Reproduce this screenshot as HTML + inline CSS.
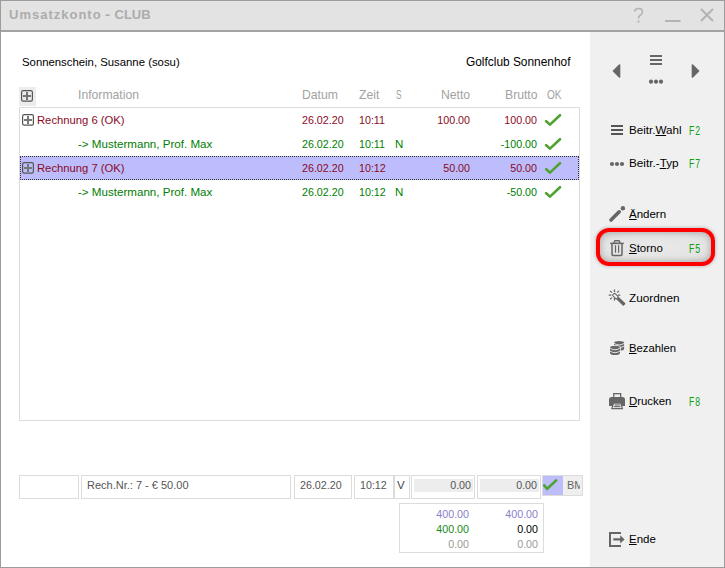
<!DOCTYPE html>
<html><head><meta charset="utf-8">
<style>
*{margin:0;padding:0;box-sizing:border-box}
html,body{width:725px;height:568px;overflow:hidden;background:#fff}
body{position:relative;font-family:"Liberation Sans",sans-serif;font-size:11.5px;color:#000}
.a{position:absolute;white-space:nowrap;line-height:14px}
#win{position:absolute;left:0;top:0;width:725px;height:568px;border:1px solid #9c9c9c;background:#fff}
#title{position:absolute;left:1px;top:1px;width:723px;height:29px;background:#e3e3e3}
#tline{position:absolute;left:1px;top:30px;width:723px;height:2px;background:#a3a3a3}
#panel{position:absolute;left:590px;top:32px;width:134px;height:535px;background:#f0f0f0}
.hdr{color:#a2a2a2;font-size:12.2px}
.num{font-size:10.7px}
.red{color:#8a0a1e}
.grn{color:#008000}
.box{position:absolute;border:1px solid #dcdcdc;background:#fff}
.k{color:#000}
.fk{color:#0ea00e;font-size:12.4px;letter-spacing:1.4px;transform:scaleX(0.7);transform-origin:0 0}
.u{text-decoration:underline}
</style></head><body>
<div id="win"></div>
<div id="title"></div>
<div id="tline"></div>
<div class="a" style="left:9px;top:5px;font-size:13px;font-weight:bold;color:#acacac;line-height:20px;letter-spacing:1px">Umsatzkonto</div>
<div class="a" style="left:105px;top:5px;font-size:13px;font-weight:bold;color:#acacac;line-height:20px;transform:scaleX(1.2);transform-origin:0 0">-</div>
<div class="a" style="left:114.5px;top:5px;font-size:13px;font-weight:bold;color:#acacac;line-height:20px">CLUB</div>
<!-- title icons -->
<svg class="a" style="left:620px;top:0" width="104" height="30" viewBox="620 0 104 30">
  <path d="M634.5 11.5 Q635 8.5 638.5 8.5 Q642.5 8.5 642.5 12 Q642.5 14 640 15.5 Q638.5 16.5 638.5 18.5" fill="none" stroke="#b3b3b3" stroke-width="1.6"/>
  <rect x="637.6" y="20.5" width="1.8" height="2" fill="#b3b3b3"/>
  <rect x="665" y="20" width="15.5" height="2" fill="#b3b3b3"/>
  <path d="M701 9 L713 21 M713 9 L701 21" stroke="#b3b3b3" stroke-width="2"/>
</svg>

<div id="panel"></div>

<div class="a k" style="left:22px;top:55px;font-size:11.35px">Sonnenschein, Susanne (sosu)</div>
<div class="a k" style="left:466px;top:55px;font-size:11.9px">Golfclub Sonnenhof</div>

<!-- header -->
<div class="a" style="left:19px;top:87px;width:17px;height:19px;background:#ececec"></div>
<div class="a hdr" style="left:78px;top:88px">Information</div>
<div class="a hdr" style="left:302px;top:88px">Datum</div>
<div class="a hdr" style="left:359px;top:88px">Zeit</div>
<div class="a hdr" style="left:395.5px;top:88px;transform:scaleX(0.68);transform-origin:0 0">S</div>
<div class="a hdr" style="left:441px;top:88px">Netto</div>
<div class="a hdr" style="left:505px;top:88px">Brutto</div>
<div class="a hdr" style="left:547px;top:88px;transform:scaleX(0.83);transform-origin:0 0">OK</div>

<!-- table -->
<div class="box" style="left:19px;top:107px;width:561px;height:314px"></div>
<div class="a" style="left:20px;top:156px;width:559px;height:24px;background:#bdbdfb;border:1px dotted #333"></div>

<div class="a red" style="left:37px;top:113px;font-size:11.25px">Rechnung 6 (OK)</div>
<div class="a red num" style="left:302px;top:113px">26.02.20</div>
<div class="a red num" style="left:359px;top:113px">10:11</div>
<div class="a red num" style="left:430px;top:113px;width:40px;text-align:right">100.00</div>
<div class="a red num" style="left:497px;top:113px;width:40px;text-align:right">100.00</div>

<div class="a grn" style="left:78px;top:137px;font-size:11.6px">-&gt; Mustermann, Prof. Max</div>
<div class="a grn num" style="left:302px;top:137px">26.02.20</div>
<div class="a grn num" style="left:359px;top:137px">10:11</div>
<div class="a grn" style="left:395px;top:137px">N</div>
<div class="a grn num" style="left:487px;top:137px;width:50px;text-align:right">-100.00</div>

<div class="a red" style="left:37px;top:161px;font-size:11.25px">Rechnung 7 (OK)</div>
<div class="a red num" style="left:302px;top:161px">26.02.20</div>
<div class="a red num" style="left:359px;top:161px">10:12</div>
<div class="a red num" style="left:430px;top:161px;width:40px;text-align:right">50.00</div>
<div class="a red num" style="left:497px;top:161px;width:40px;text-align:right">50.00</div>

<div class="a grn" style="left:78px;top:185px;font-size:11.6px">-&gt; Mustermann, Prof. Max</div>
<div class="a grn num" style="left:302px;top:185px">26.02.20</div>
<div class="a grn num" style="left:359px;top:185px">10:12</div>
<div class="a grn" style="left:395px;top:185px">N</div>
<div class="a grn num" style="left:487px;top:185px;width:50px;text-align:right">-50.00</div>

<!-- plus icons & checks -->
<svg class="a" style="left:0;top:0" width="590" height="210" viewBox="0 0 590 210">
  <g transform="translate(21 90)"><rect x="0.6" y="0.6" width="10.8" height="10.6" rx="1.6" fill="none" stroke="#555" stroke-width="1.2"/><path d="M2 6 H10 M6 2 V10" stroke="#777" stroke-width="2"/></g>
  <g transform="translate(22 114)"><rect x="0.6" y="0.6" width="10.8" height="10.6" rx="1.6" fill="none" stroke="#555" stroke-width="1.2"/><path d="M2 6 H10 M6 2 V10" stroke="#777" stroke-width="2"/></g>
  <g transform="translate(22 162)"><rect x="0.6" y="0.6" width="10.8" height="10.6" rx="1.6" fill="none" stroke="#555" stroke-width="1.2"/><path d="M2 6 H10 M6 2 V10" stroke="#777" stroke-width="2"/></g>
  <path transform="translate(545 114)" d="M1.2 7.2 L5 10.6 L15 1.2" fill="none" stroke="#4fa22f" stroke-width="2.6" stroke-linecap="round"/>
  <path transform="translate(545 138)" d="M1.2 7.2 L5 10.6 L15 1.2" fill="none" stroke="#4fa22f" stroke-width="2.6" stroke-linecap="round"/>
  <path transform="translate(545 162)" d="M1.2 7.2 L5 10.6 L15 1.2" fill="none" stroke="#4fa22f" stroke-width="2.6" stroke-linecap="round"/>
  <path transform="translate(545 186)" d="M1.2 7.2 L5 10.6 L15 1.2" fill="none" stroke="#4fa22f" stroke-width="2.6" stroke-linecap="round"/>
</svg>

<!-- bottom inputs -->
<div class="box" style="left:19px;top:475px;width:60px;height:24px"></div>
<div class="box" style="left:81px;top:475px;width:210px;height:24px"></div>
<div class="a" style="left:87px;top:478px;color:#555;font-size:11px">Rech.Nr.: 7 - € 50.00</div>
<div class="box" style="left:294px;top:475px;width:58px;height:24px"></div>
<div class="a" style="left:300px;top:478px;color:#555;font-size:10.7px">26.02.20</div>
<div class="box" style="left:354px;top:475px;width:40px;height:24px"></div>
<div class="a" style="left:360px;top:478px;color:#555;font-size:10.7px">10:12</div>
<div class="box" style="left:394px;top:475px;width:16px;height:24px"></div>
<div class="a" style="left:397px;top:478px;color:#444">V</div>
<div class="box" style="left:411px;top:475px;width:64px;height:24px"></div>
<div class="a" style="left:414px;top:479px;width:59px;height:13px;background:#ededed"></div>
<div class="a" style="left:430px;top:478px;width:41px;text-align:right;color:#555;font-size:10.7px">0.00</div>
<div class="box" style="left:477px;top:475px;width:64px;height:24px"></div>
<div class="a" style="left:480px;top:479px;width:59px;height:13px;background:#ededed"></div>
<div class="a" style="left:496px;top:478px;width:41px;text-align:right;color:#555;font-size:10.7px">0.00</div>
<div class="a" style="left:542px;top:475px;width:41px;height:21px;background:#efefef;border:1px solid #dcdcdc"></div>
<div class="a" style="left:543px;top:476px;width:20px;height:19px;background:#bdbdfb"></div>
<svg class="a" style="left:540px;top:470px" width="25" height="25" viewBox="540 470 25 25"><path d="M544.2 485.4 L547.2 488.8 L556.2 480.4" fill="none" stroke="#4fa22f" stroke-width="2.6" stroke-linecap="round"/></svg>
<div class="a" style="left:567px;top:476px;width:13px;height:19px;overflow:hidden"><div class="a" style="left:0;top:2px;color:#666;font-size:11px">BM</div></div>

<div class="box" style="left:399px;top:503px;width:145px;height:50px"></div>
<div class="a" style="left:420px;top:507px;width:49px;text-align:right;color:#8a80c8;font-size:10.7px">400.00</div>
<div class="a" style="left:489px;top:507px;width:49px;text-align:right;color:#8a80c8;font-size:10.7px">400.00</div>
<div class="a" style="left:420px;top:522px;width:49px;text-align:right;color:#1a8a1a;font-size:10.7px">400.00</div>
<div class="a" style="left:489px;top:522px;width:49px;text-align:right;color:#000;font-size:10.7px">0.00</div>
<div class="a" style="left:420px;top:537px;width:49px;text-align:right;color:#999;font-size:10.7px">0.00</div>
<div class="a" style="left:489px;top:537px;width:49px;text-align:right;color:#999;font-size:10.7px">0.00</div>

<!-- panel -->
<div class="a" style="left:595.5px;top:228px;width:119px;height:38px;border:4.5px solid #ff0000;border-radius:13px;background:radial-gradient(ellipse at 50% 50%,#e9e9e9 0%,#e4e4e4 60%,#d6d6d6 100%);box-shadow:0 0 3px 1px rgba(0,0,0,0.18), inset 0 0 5px 2px rgba(0,0,0,0.16)"></div>
<svg class="a" style="left:590px;top:32px" width="134" height="535" viewBox="590 32 134 535">
  <path d="M619.5 65 L613.5 71 L619.5 77 Z" fill="#666" stroke="#666" stroke-width="1.6" stroke-linejoin="round"/>
  <path d="M692.5 65 L698.5 71 L692.5 77 Z" fill="#666" stroke="#666" stroke-width="1.6" stroke-linejoin="round"/>
  <rect x="650" y="55" width="12" height="2" fill="#666"/>
  <rect x="650" y="59" width="12" height="2" fill="#666"/>
  <rect x="650" y="63" width="12" height="2" fill="#666"/>
  <circle cx="651" cy="81.7" r="2.1" fill="#666"/>
  <circle cx="656" cy="81.7" r="2.1" fill="#666"/>
  <circle cx="661" cy="81.7" r="2.1" fill="#666"/>
  <!-- red storno box -->
  <!-- hamburger -->
  <rect x="611" y="125" width="12" height="2" fill="#555"/>
  <rect x="611" y="129" width="12" height="2" fill="#555"/>
  <rect x="611" y="133" width="12" height="2" fill="#555"/>
  <circle cx="612" cy="164" r="2.1" fill="#666"/>
  <circle cx="617" cy="164" r="2.1" fill="#666"/>
  <circle cx="622" cy="164" r="2.1" fill="#666"/>
  <!-- pencil -->
  <path d="M611 220 L619.2 211.8" stroke="#666" stroke-width="3.6" stroke-linecap="round"/><circle cx="622.9" cy="208.2" r="2.2" fill="#666"/>
  <!-- trash -->
  <path d="M613.7 243 L614.9 240.7 H619.1 L620.3 243" fill="#c8c8c8" stroke="#666" stroke-width="1.3"/>
  <g fill="none" stroke="#666" stroke-width="1.5">
    <path d="M610.2 243.4 H623.8"/>
    <path d="M612 244 V254.3 Q612 255.6 613.3 255.6 H620.7 Q622 255.6 622 254.3 V244"/>
  </g>
  <path d="M615.5 245.3 V252.7 M618.6 245.3 V252.7" stroke="#666" stroke-width="1.2"/>
  <!-- wand -->
  <g stroke="#666" stroke-width="1.3" fill="none"><path d="M614.5 289.6 V292.1 M614.5 298.1 V300.6 M608.7 295.1 H611.3 M617.8 295.1 H620.3 M610.2 290.9 L611.9 292.6 M618.9 290.9 L617.2 292.6 M610.2 299.3 L611.9 297.6"/></g>
  <g transform="translate(614.3 295) rotate(44)"><rect x="-1.2" y="-1.6" width="5.6" height="3.2" rx="0.8" fill="none" stroke="#666" stroke-width="1.1"/><rect x="4.4" y="-1.7" width="9.8" height="3.4" rx="0.8" fill="#666"/></g>
  <!-- coins -->
  <g transform="translate(619.1 342.8)">
    <rect x="-5" y="0" width="10" height="6" fill="#666"/><ellipse cx="0" cy="0" rx="5" ry="1.9" fill="#666"/><ellipse cx="0" cy="6" rx="5" ry="1.9" fill="#666"/>
    <path d="M-5.5 0.3 Q0 4.1 5.5 0.3 M-5.5 3 Q0 6.8 5.5 3" stroke="#f0f0f0" stroke-width="0.9" fill="none"/>
  </g>
  <g transform="translate(615 347.6)">
    <rect x="-5" y="0" width="10" height="6.2" fill="#666" stroke="#f0f0f0" stroke-width="1.4"/><ellipse cx="0" cy="0" rx="5" ry="1.9" fill="#666" stroke="#f0f0f0" stroke-width="1.4"/><ellipse cx="0" cy="6.2" rx="5" ry="1.9" fill="#666" stroke="#f0f0f0" stroke-width="1.4"/>
    <rect x="-5" y="0" width="10" height="6.2" fill="#666"/><ellipse cx="0" cy="0" rx="5" ry="1.9" fill="#666"/>
    <path d="M-5.5 0.3 Q0 4.1 5.5 0.3 M-5.5 3.2 Q0 7 5.5 3.2" stroke="#f0f0f0" stroke-width="0.9" fill="none"/>
  </g>
  <!-- printer -->
  <rect x="613.75" y="393.65" width="6.9" height="4.6" fill="#f0f0f0" stroke="#666" stroke-width="1.3"/>
  <path d="M609 406 V399.6 Q609 397 611.6 397 H622.4 Q625 397 625 399.6 V406 Z" fill="#666"/>
  <path d="M612.9 402.6 H621.3 L623.2 409.2 H611 Z" fill="#666"/>
  <path d="M614 403.8 H620.3 L621.6 407.9 H612.6 Z" fill="#f0f0f0"/>
  <rect x="614.6" y="404.4" width="5.2" height="1.1" fill="#666"/>
  <rect x="613.8" y="406.1" width="6.6" height="1.1" fill="#666"/>
  <!-- exit -->
  <path d="M621 533 H610 V546 H621" fill="none" stroke="#666" stroke-width="2"/>
  <path d="M613.3 538.3 H620.2 V535.2 L624.6 539.4 L620.2 543.6 V540.6 H613.3 Z" fill="#666"/>
</svg>

<div class="a k" style="left:629px;top:123px;font-size:11.65px">Beitr.<span class="u">W</span>ahl</div>
<div class="a fk" style="left:689px;top:124px">F2</div>
<div class="a k" style="left:629px;top:156px;font-size:11.75px">Beitr.-<span class="u">T</span>yp</div>
<div class="a fk" style="left:689px;top:157px">F7</div>
<div class="a k" style="left:629px;top:207px"><span class="u">Ä</span>ndern</div>
<div class="a k" style="left:629px;top:241px"><span class="u">S</span>torno</div>
<div class="a fk" style="left:689px;top:242px">F5</div>
<div class="a k" style="left:629px;top:291px;font-size:11.8px">Zuordnen</div>
<div class="a k" style="left:629px;top:341px;font-size:11.3px"><span class="u">B</span>ezahlen</div>
<div class="a k" style="left:629px;top:394px;font-size:11.4px"><span class="u">D</span>rucken</div>
<div class="a fk" style="left:689px;top:395px">F8</div>
<div class="a k" style="left:629px;top:532px"><span class="u">E</span>nde</div>
</body></html>
